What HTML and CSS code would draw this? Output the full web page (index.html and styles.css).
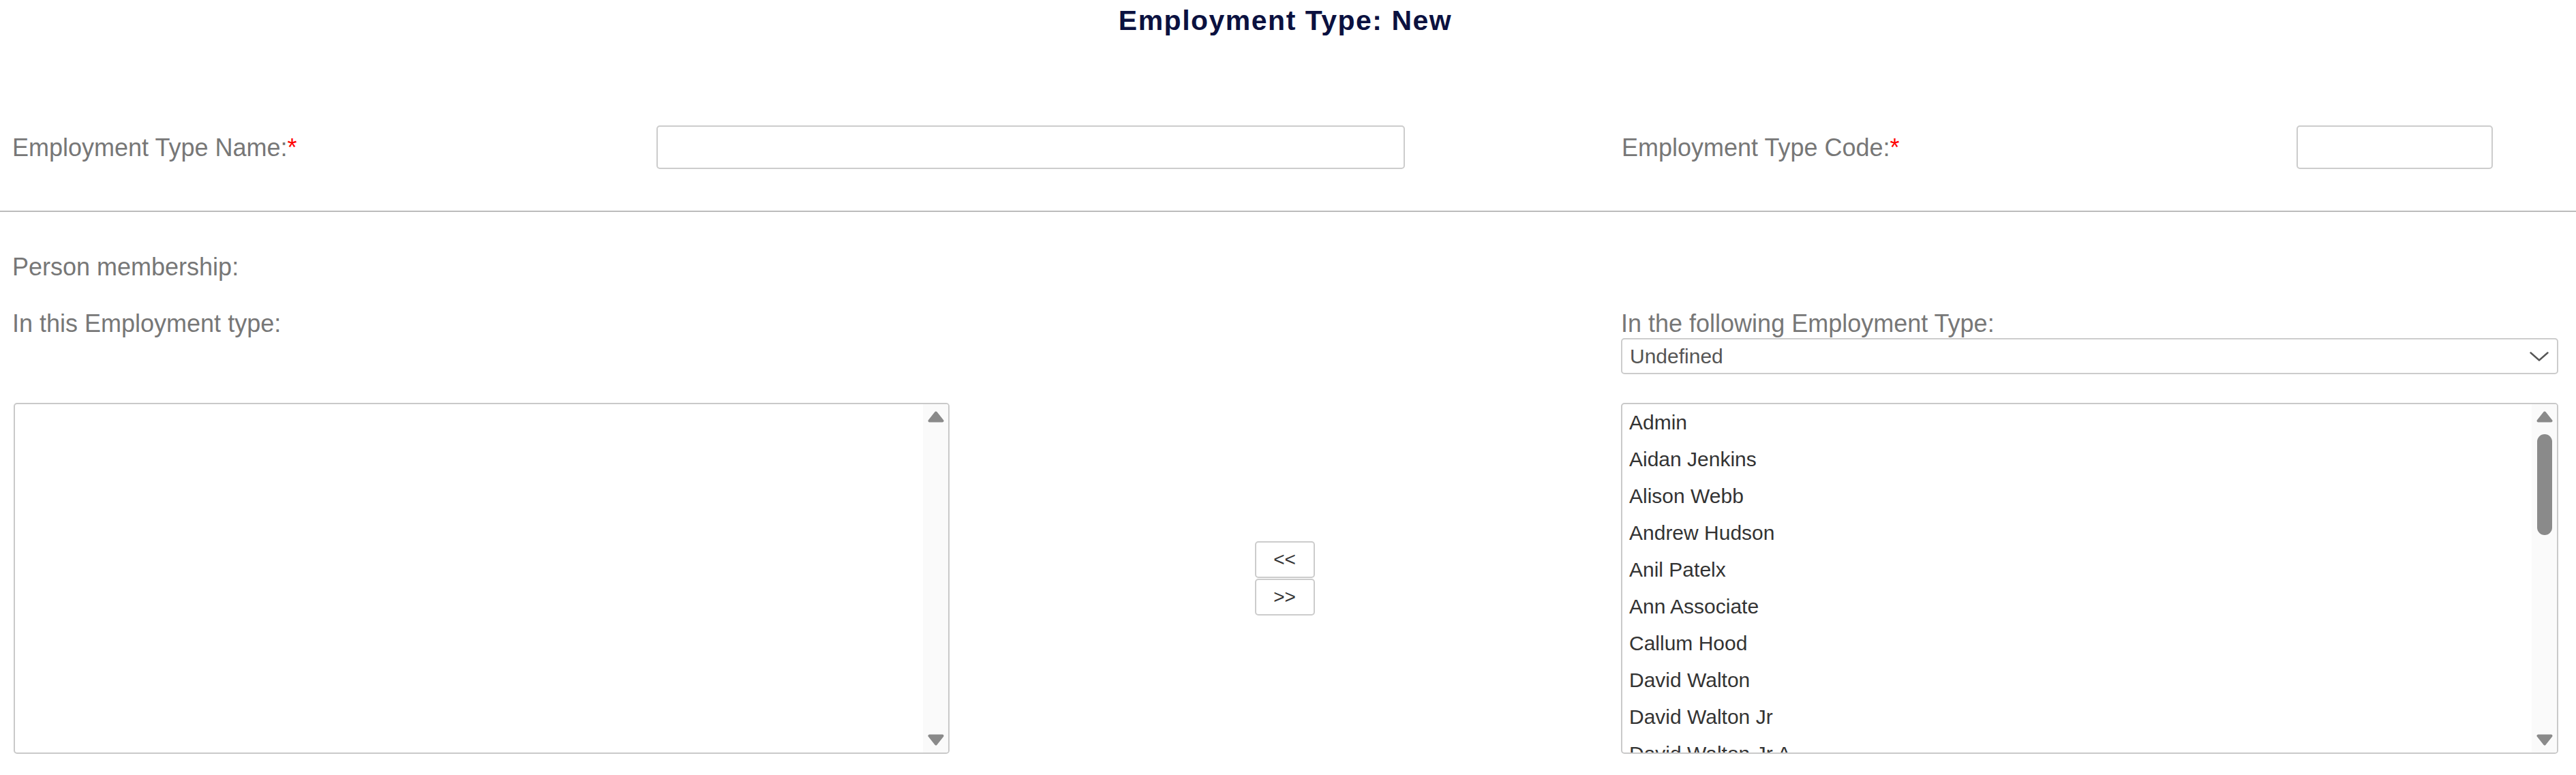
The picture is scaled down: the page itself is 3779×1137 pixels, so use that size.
FILE: index.html
```html
<!DOCTYPE html>
<html lang="en">
<head>
<meta charset="utf-8">
<title>Employment Type: New</title>
<link rel="stylesheet" href="styles.css">
</head>
<body>
<div class="page">
  <h1 class="title">Employment Type: New</h1>

  <div class="type-row">
    <label class="lbl" for="etName">Employment Type Name:<span class="req">*</span></label>
    <input class="txt" id="etName" type="text">
    <span class="spacer"></span>
    <label class="lbl" for="etCode">Employment Type Code:<span class="req">*</span></label>
    <input class="txt" id="etCode" type="text">
  </div>

  <div class="divider"></div>

  <div class="lbl section-label">Person membership:</div>

  <div class="members">
    <div class="lbl">In this Employment type:</div>
    <div></div>
    <div class="right-head">
      <div class="lbl">In the following Employment Type:</div>
      <div class="select">
        <span class="select-value">Undefined</span>
        <svg class="chevron" width="28" height="14" viewBox="0 0 28 14"><polyline points="1.5,1.5 14,12.5 26.5,1.5" fill="none" stroke="#555" stroke-width="2.4" stroke-linecap="round" stroke-linejoin="round"/></svg>
      </div>
    </div>

    <div class="listbox listbox-left">
      <ul class="items"></ul>
      <div class="scrollbar">
        <svg class="arrow" width="24" height="17" viewBox="0 0 24 17"><polygon points="12,2.5 21.5,14.5 2.5,14.5" fill="#8a8a8a" stroke="#8a8a8a" stroke-width="4" stroke-linejoin="round"/></svg>
        <div class="track-fill"></div>
        <svg class="arrow" width="24" height="17" viewBox="0 0 24 17"><polygon points="2.5,2.5 21.5,2.5 12,14.5" fill="#8a8a8a" stroke="#8a8a8a" stroke-width="4" stroke-linejoin="round"/></svg>
      </div>
    </div>

    <div class="mover">
      <button class="btn" type="button">&lt;&lt;</button>
      <button class="btn" type="button">&gt;&gt;</button>
    </div>

    <div class="listbox">
      <ul class="items">
        <li>Admin</li>
        <li>Aidan Jenkins</li>
        <li>Alison Webb</li>
        <li>Andrew Hudson</li>
        <li>Anil Patelx</li>
        <li>Ann Associate</li>
        <li>Callum Hood</li>
        <li>David Walton</li>
        <li>David Walton Jr</li>
        <li>David Walton Jr A</li>
      </ul>
      <div class="scrollbar">
        <svg class="arrow" width="24" height="17" viewBox="0 0 24 17"><polygon points="12,2.5 21.5,14.5 2.5,14.5" fill="#8a8a8a" stroke="#8a8a8a" stroke-width="4" stroke-linejoin="round"/></svg>
        <div class="thumb"></div>
        <div class="track-fill"></div>
        <svg class="arrow" width="24" height="17" viewBox="0 0 24 17"><polygon points="2.5,2.5 21.5,2.5 12,14.5" fill="#8a8a8a" stroke="#8a8a8a" stroke-width="4" stroke-linejoin="round"/></svg>
      </div>
    </div>
  </div>
</div>
</body>
</html>
```
FILE: styles.css
```css
* { box-sizing: border-box; }

html, body {
  margin: 0;
  padding: 0;
  background: #ffffff;
}

body {
  font-family: "Liberation Sans", Arial, sans-serif;
  color: #333333;
}

.page {
  padding: 0 26px 0 18px;
}

.title {
  margin: 6px 0 0 0;
  font-size: 41px;
  line-height: 48px;
  font-weight: bold;
  letter-spacing: 1.5px;
  color: #0b1140;
  text-align: center;
}

.lbl {
  font-size: 36px;
  line-height: 41px;
  color: #777777;
}

.req {
  color: #ff0000;
}

.type-row {
  margin-top: 130px;
  display: grid;
  grid-template-columns: 945px 1098px 318px 990px 288px;
  align-items: center;
  height: 64px;
}

.txt {
  height: 64px;
  width: 100%;
  border: 2px solid #cccccc;
  border-radius: 5px;
  background: #ffffff;
  margin: 0;
  padding: 0 10px;
  font: 30px "Liberation Sans", Arial, sans-serif;
}

.divider {
  margin: 61px -26px 0 -18px;
  border-top: 2px solid #bcbcbc;
}

.section-label {
  margin-top: 60px;
}

.members {
  margin-top: 42px;
  display: grid;
  grid-template-columns: 1375px 985px 1375px;
  grid-template-rows: auto 515px;
  row-gap: 42px;
  align-items: start;
}

.right-head {
  display: flex;
  flex-direction: column;
}

.select {
  margin-top: 1px;
  height: 53px;
  border: 2px solid #cccccc;
  border-radius: 5px;
  background: #ffffff;
  display: flex;
  align-items: center;
  justify-content: space-between;
  padding: 0 12px 0 11px;
}

.select-value {
  font-size: 30px;
  color: #555555;
}

.listbox {
  height: 515px;
  border: 2px solid #c9c9c9;
  border-radius: 5px;
  background: #ffffff;
  display: flex;
  overflow: hidden;
}

.listbox-left {
  margin-left: 2px;
}

.items {
  flex: 1;
  list-style: none;
  margin: 0;
  padding: 0 0 0 10px;
  overflow: hidden;
}

.items li {
  height: 54px;
  line-height: 54px;
  font-size: 30px;
  color: #333333;
  white-space: nowrap;
}

.scrollbar {
  width: 37px;
  background: #fafafa;
  display: flex;
  flex-direction: column;
  align-items: center;
  padding: 10px 0 10px 0;
}

.arrow {
  display: block;
  flex: none;
}

.thumb {
  margin-top: 17px;
  width: 22px;
  height: 148px;
  border-radius: 11px;
  background: #8a8a8a;
  flex: none;
}

.track-fill {
  flex: 1;
}

.mover {
  align-self: center;
  justify-self: center;
  display: flex;
  flex-direction: column;
  gap: 1px;
  margin-left: -2px;
}

.btn {
  width: 88px;
  height: 54px;
  border: 2px solid #cccccc;
  border-radius: 5px;
  background: #ffffff;
  color: #333333;
  font: 28px "Liberation Sans", Arial, sans-serif;
  padding: 0;
  margin: 0;
}
```
